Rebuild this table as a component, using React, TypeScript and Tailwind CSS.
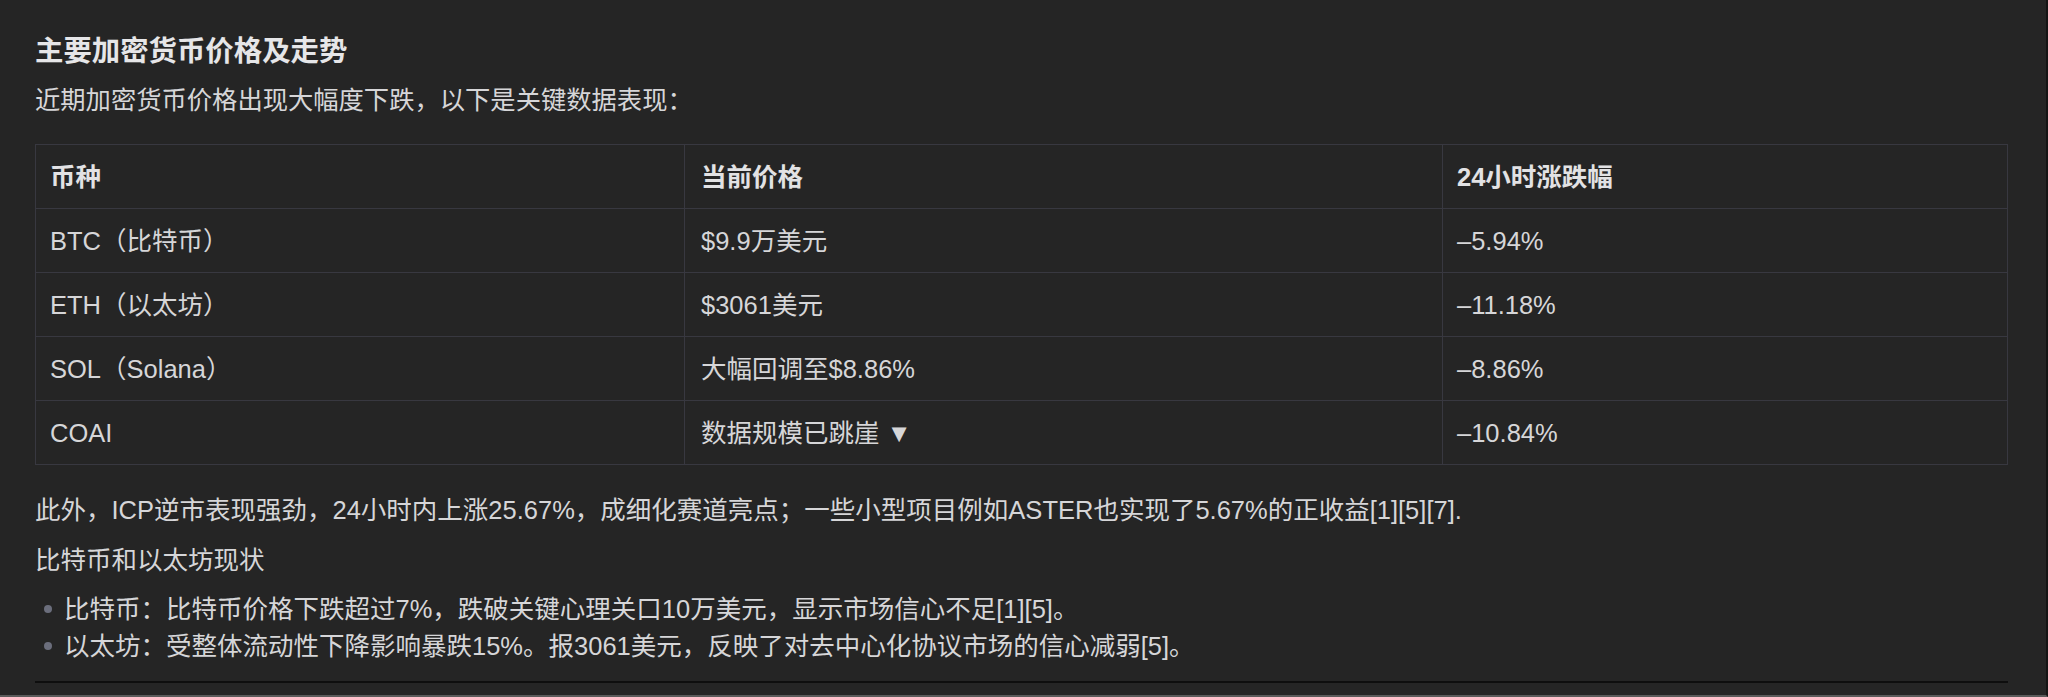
const rows = [
  { coin: "BTC（比特币）", price: "$9.9万美元", change: "–5.94%" },
  { coin: "ETH（以太坊）", price: "$3061美元", change: "–11.18%" },
  { coin: "SOL（Solana）", price: "大幅回调至$8.86%", change: "–8.86%" },
  { coin: "COAI", price: "数据规模已跳崖 ▼", change: "–10.84%" },
];

const bullets = [
  "比特币：比特币价格下跌超过7%，跌破关键心理关口10万美元，显示市场信心不足[1][5]。",
  "以太坊：受整体流动性下降影响暴跌15%。报3061美元，反映了对去中心化协议市场的信心减弱[5]。",
];

export default function App() {
  return (
    <div
      className="h-[697px] w-full bg-[#252525] text-[#d6d6d8] border-r-2 border-r-[#151515] border-b-2 border-b-[#5a5a5a] pl-[35px] pr-[38px] pt-[33px] overflow-hidden"
      style={{ fontFamily: '"Liberation Sans", "Noto Sans CJK SC", sans-serif' }}
    >
      {/* Heading */}
      <h2 className="text-[28.4px] leading-[36px] font-bold text-[#e6e6e8]">
        主要加密货币价格及走势
      </h2>
      <p className="mt-[13px] text-[25.3px] leading-[36px]">
        近期加密货币价格出现大幅度下跌，以下是关键数据表现：
      </p>

      {/* Price table */}
      <table className="mt-[26px] w-full border-collapse text-[25.5px] leading-[36px]">
        <thead>
          <tr>
            <th className="w-[649px] h-[64px] border border-[#383840] px-[14px] text-left font-semibold text-[#e2e2e4]">
              币种
            </th>
            <th className="w-[758px] h-[64px] border border-[#383840] px-4 text-left font-semibold text-[#e2e2e4]">
              当前价格
            </th>
            <th className="h-[64px] border border-[#383840] px-[14px] text-left font-semibold text-[#e2e2e4]">
              24小时涨跌幅
            </th>
          </tr>
        </thead>
        <tbody>
          {rows.map((r) => (
            <tr key={r.coin}>
              <td className="h-[64px] border border-[#383840] px-[14px]">{r.coin}</td>
              <td className="h-[64px] border border-[#383840] px-4">{r.price}</td>
              <td className="h-[64px] border border-[#383840] px-[14px]">{r.change}</td>
            </tr>
          ))}
        </tbody>
      </table>

      <p className="mt-[27px] text-[25.5px] leading-[36px]">
        此外，ICP逆市表现强劲，24小时内上涨25.67%，成细化赛道亮点；一些小型项目例如ASTER也实现了5.67%的正收益[1][5][7].
      </p>
      <p className="mt-[14px] text-[25.5px] leading-[36px]">比特币和以太坊现状</p>

      <ul className="mt-[13px] flex flex-col gap-px text-[25.5px] leading-[36px]">
        {bullets.map((b) => (
          <li key={b} className="flex items-center">
            <span className="ml-[9px] mr-3 h-2 w-2 shrink-0 rounded-full bg-[#6b6e7c]" />
            <span>{b}</span>
          </li>
        ))}
      </ul>

      <div className="mt-[17px] h-[2px] bg-[#0e0e0e]" />
    </div>
  );
}
